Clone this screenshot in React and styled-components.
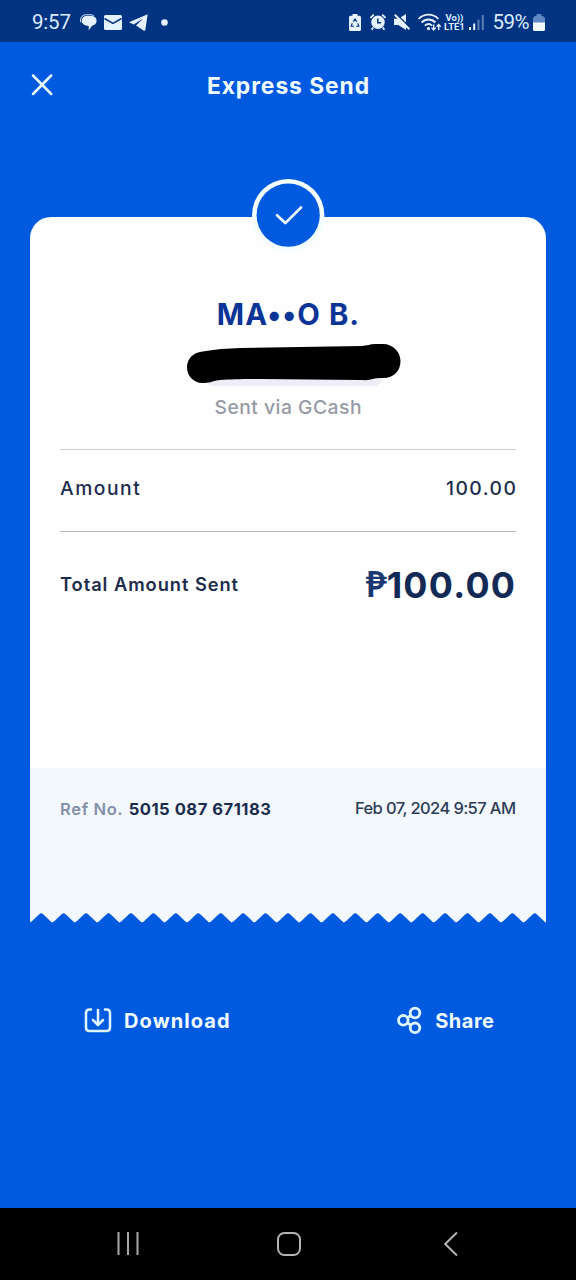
import React from 'react';
import styled, { createGlobalStyle } from 'styled-components';

const GlobalStyle = createGlobalStyle`
  * {
    box-sizing: border-box;
  }

  body {
    margin: 0;
    background: #005ae0;
    font-family: Inter, 'Liberation Sans', sans-serif;
  }
`;

const Screen = styled.div`
  display: flex;
  flex-direction: column;
  width: 576px;
  height: 1280px;
  background: #005ae0;
  overflow: hidden;
`;

const StatusBar = styled.div`
  display: flex;
  justify-content: space-between;
  align-items: center;
  height: 42px;
  padding: 2px 31px 0 32px;
  background: #003381;
  color: #dcecff;
  font-family: Roboto, sans-serif;
`;

const StatusGroup = styled.div`
  display: flex;
  align-items: center;
`;

const StatusText = styled.span`
  margin-left: ${(props) => props.$gap || 0}px;
  font-size: 20.5px;
  line-height: 24px;
  letter-spacing: ${(props) => props.$spacing || 0}px;
`;

const Icon = styled.svg`
  display: block;
  flex: none;
  margin-left: ${(props) => props.$gap || 0}px;
  overflow: visible;
`;

const Network = styled.div`
  display: flex;
  flex-direction: column;
  align-items: center;
  width: 21px;
  margin-left: 3px;
  font-size: 9.5px;
  font-weight: 700;
  line-height: 9px;
`;

const Header = styled.header`
  display: grid;
  grid-template-columns: 24px 1fr 24px;
  align-items: center;
  height: 87px;
  padding: 0 30px;
`;

const CloseButton = styled.button`
  padding: 0 0 2px;
  border: none;
  background: none;
  cursor: pointer;
`;

const Text = styled.span`
  color: ${(props) => props.$color || '#1c2c4c'};
  font-size: ${(props) => props.$size}px;
  font-weight: ${(props) => props.$weight || 500};
  letter-spacing: ${(props) => props.$spacing || 0}px;
  margin-right: ${(props) => -(props.$spacing || 0)}px;
  line-height: 1.2;
  white-space: nowrap;
`;

const Title = styled(Text).attrs({ as: 'h1' })`
  margin-top: 0;
  margin-bottom: 0;
  text-align: center;
`;

const Receipt = styled.main`
  position: relative;
  display: flex;
  flex-direction: column;
  height: 706px;
  margin: 88px 30px 0;
`;

const Badge = styled.div`
  position: absolute;
  top: -38px;
  left: 222px;
`;

const Details = styled.section`
  height: 551px;
  padding: 80px 30px 0;
  border-radius: 21px 21px 0 0;
  background: #fefefe;
`;

const Recipient = styled.div`
  display: flex;
  flex-direction: column;
  align-items: center;
  height: 152px;
`;

const Redaction = styled(Icon)`
  margin: 10px 0 9px 12px;
`;

const Line = styled.div`
  display: flex;
  align-items: center;
  justify-content: space-between;
  height: ${(props) => props.$height}px;
  padding-bottom: ${(props) => props.$lift || 0}px;
  border-top: 1.5px solid ${(props) => props.$border};
`;

const Total = styled.div`
  display: flex;
  align-items: center;
  margin-right: 1px;
`;

const Peso = styled(Text)`
  margin-right: 0;
  padding-bottom: 3px;
  font-family: Lato, sans-serif;
`;

const Footer = styled.section`
  display: flex;
  justify-content: space-between;
  height: 145px;
  padding: 31px 30px 0;
  background: #f3f7fe;
`;

const Reference = styled.div`
  display: flex;
  gap: 6px;
  padding-top: 1px;
`;

const Actions = styled.div`
  display: flex;
  justify-content: space-between;
  margin: 78px 82px 0 84px;
  height: 40px;
`;

const Action = styled.button`
  display: flex;
  align-items: center;
  gap: ${(props) => props.$gap}px;
  padding: 0;
  border: none;
  background: none;
  font-family: inherit;
  cursor: pointer;
`;

const NavBar = styled.nav`
  display: flex;
  justify-content: space-between;
  align-items: center;
  height: 72px;
  margin-top: auto;
  padding: 0 118px 0 116px;
  background: #000;
`;

const TEETH = 23;

const zigzag = () => {
  const step = 516 / TEETH;
  let d = 'M0 0V9.3';
  for (let i = 0; i < TEETH; i++) {
    const x = i * step;
    const mid = x + step / 2;
    d += `L${x + 1.6} 8.6L${mid - 2} 1.3Q${mid} -0.6 ${mid + 2} 1.3L${x + step - 1.6} 8.6Q${x + step} 10 ${x + step} 9.3`;
  }
  return `${d}V0Z`;
};

const App = () => (
  <>
    <GlobalStyle />
    <Screen>
      <StatusBar>
        <StatusGroup>
          <StatusText $spacing={-0.2}>9:57</StatusText>
          {/* chat */}
          <Icon $gap={9} width="17" height="17" viewBox="0 0 17 17" fill="#e6f3ff">
            <path d="M5.500 2H11c3.400 0 5.600 2 5.600 4.700 0 2.900-2.200 4.500-4.200 4.900L8.700 16.200V12C5 12 1.800 10 1.800 6.800c0-2.500 1.700-4.400 3.700-4.800Z" />
            <path d="M1 8.500C-.4 4.500 2 .8 5.500.8h5c1.200 0 2.400.3 3.200.8" fill="none" stroke="#e6f3ff" strokeWidth="1" />
          </Icon>
          {/* mail */}
          <Icon $gap={7.5} width="18" height="15" viewBox="0 0 18 15">
            <rect width="18" height="15" rx="1.500" fill="#e6f3ff" />
            <path d="M.5 3.500 9 8.300l8.500-4.800" fill="none" stroke="#003381" strokeWidth="1.500" />
          </Icon>
          {/* paper plane */}
          <Icon $gap={6.5} width="19" height="17" viewBox="0 0 19 17" fill="#e6f3ff">
            <path d="M18.700.3 0 8.300l4.700 2.100 9.300-6-7 7.200 7.900 5.100c.7.300 1.200 0 1.400-.7Z" />
          </Icon>
          <Icon $gap={13} width="7" height="7" viewBox="0 0 7 7">
            <circle cx="3.500" cy="3.500" r="3.300" fill="#e6f3ff" />
          </Icon>
        </StatusGroup>
        <StatusGroup>
          {/* battery protection */}
          <Icon width="12" height="17" viewBox="0 0 12 17">
            <path d="M3.500 0h5v1.700H10.500a1.500 1.500 0 0 1 1.500 1.500V15.500a1.500 1.500 0 0 1-1.500 1.500h-9A1.500 1.500 0 0 1 0 15.500V3.200a1.500 1.500 0 0 1 1.500-1.500h2Z" fill="#e6f3ff" />
            <path d="M4.200 7.800 6 5.100l1.800 2.700M8.700 9.300l1.100 2.900H7.200M5 12.200H2.200l1.100-2.900" fill="none" stroke="#003381" strokeWidth="1.100" />
          </Icon>
          {/* alarm */}
          <Icon $gap={9} width="16" height="16" viewBox="0 0 16 16">
            <circle cx="8" cy="8.300" r="6.700" fill="#e6f3ff" />
            <path d="M.4 3.800 3.800.6M15.600 3.800 12.200.6M3.200 13.500 1.600 15.700M12.800 13.500l1.600 2.200" stroke="#e6f3ff" strokeWidth="1.800" />
            <path d="M7.800 4.600v4.200h3.400" fill="none" stroke="#003381" strokeWidth="1.500" />
          </Icon>
          {/* muted */}
          <Icon $gap={8} width="16" height="16" viewBox="0 0 16 16">
            <path d="M0 4.800h4.300L12 0v16l-7.700-5H0Z" fill="#e6f3ff" />
            <path d="M2-.2 16.800 14.200" stroke="#003381" strokeWidth="1.600" />
            <path d="M.8 .8 15.400 15.200" stroke="#e6f3ff" strokeWidth="1.900" />
          </Icon>
          {/* wifi */}
          <Icon $gap={8} width="23" height="17" viewBox="0 0 23 17" fill="none" stroke="#e6f3ff" strokeWidth="1.800">
            <path d="M.6 5C6-.8 15-.8 20.400 5M3.600 8.500c4-4 9.800-4 13.800 0M6.800 11.700c2.400-2.200 5-2.200 7.400 0" />
            <circle cx="10.500" cy="14.600" r="1.600" fill="#e6f3ff" stroke="none" />
            <path d="M15.700 10.500v5M13.600 13.600l2.100 2.300 2.100-2.300M20.700 16v-5M18.700 12.700l2-2.200 2 2.200" strokeWidth="1.400" />
          </Icon>
          <Network>
            <span>Vo))</span>
            <span>LTE1</span>
          </Network>
          {/* signal strength */}
          <Icon $gap={4.5} width="15" height="15" viewBox="0 0 15 15" fill="#e6f3ff">
            <path d="M0 12h2v3H0ZM4.200 8.500h2V15h-2Z" />
            <path d="M8.500 4.500h2V15h-2ZM12.800 0h2v15h-2Z" opacity="0.400" />
          </Icon>
          <StatusText $gap={8} $spacing={-0.5}>59%</StatusText>
          <Icon $gap={4} width="12" height="17" viewBox="0 0 12 17">
            <path d="M3.500 0h5v2H10l2 2v5H0V4l2-2h1.500Z" fill="#5f86c4" />
            <path d="M0 8.500h12v7a1.500 1.500 0 0 1-1.500 1.500h-9A1.500 1.500 0 0 1 0 15.500Z" fill="#f0f8ff" />
          </Icon>
        </StatusGroup>
      </StatusBar>

      <Header>
        <CloseButton aria-label="Close">
          <Icon width="24" height="24" viewBox="0 0 24 24" fill="none" stroke="#e8fbff" strokeWidth="2.500" strokeLinecap="round">
            <path d="M3 2.500 21.200 21M21.200 2.500 3 21" />
          </Icon>
        </CloseButton>
        <Title $size={22.8} $weight={700} $spacing={0.95} $color="#f0fcff">Express Send</Title>
      </Header>

      <Receipt>
        <Details>
          <Recipient>
            <Text $size={29.3} $weight={700} $spacing={1.1} $color="#0b3497">MA••O B.</Text>
            <Redaction width="214" height="45" viewBox="187 342 214 45">
              <rect x="205" y="360" width="178" height="26" rx="9" fill="#ededf7" />
              <path d="M202 383c-8 0-15-7-15-15.500 0-9 6-14.500 14-15.800 14-2.500 26-3.200 40-3.700L362 346c5-.2 8-2 13-2h8c10 0 17.500 8 17.500 17 0 10-7 17-17 17-6 0-9 .3-14 1.800-2 .5-5 .4-9 .3l-100-1.100c-18-.1-31 .2-40 1-6 .3-9 3-18.500 3Z" fill="#000" />
            </Redaction>
            <Text $size={19.3} $weight={500} $spacing={0.5} $color="#979aa5">Sent via GCash</Text>
          </Recipient>
          <Line $height={81.5} $lift={4} $border="#cfcfd2">
            <Text $size={19.3} $spacing={1.5}>Amount</Text>
            <Text $size={19.3} $spacing={1.5}>100.00</Text>
          </Line>
          <Line $height={108} $border="#b9babd">
            <Text $size={18.3} $spacing={0.95} $weight={600}>Total Amount Sent</Text>
            <Total>
              <Peso $size={36} $weight={700} $color="#18386f">₱</Peso>
              <Text $size={35.8} $weight={700} $spacing={1.3} $color="#132a56">100.00</Text>
            </Total>
          </Line>
        </Details>
        <Footer>
          <Reference>
            <Text $size={16.6} $weight={600} $spacing={0.6} $color="#8490a7">Ref No.</Text>
            <Text $size={16.6} $weight={700} $spacing={0.5}>5015 087 671183</Text>
          </Reference>
          <Text $size={16.5} $spacing={-0.6} $color="#2c3c55">Feb 07, 2024 9:57 AM</Text>
        </Footer>
        <Icon width="516" height="10" viewBox="0 0 516 10">
          <path d={zigzag()} fill="#f3f7fe" />
        </Icon>
        <Badge>
          <Icon width="73" height="73" viewBox="0 0 73 73">
            <circle cx="36.200" cy="36.200" r="36.200" fill="#f3fdff" />
            <circle cx="36.200" cy="36.200" r="31.600" fill="#005ae0" />
            <path d="m25 36.300 8.300 7.800L49 28.500" fill="none" stroke="#effcff" strokeWidth="2.700" strokeLinecap="round" strokeLinejoin="round" />
          </Icon>
        </Badge>
      </Receipt>

      <Actions>
        <Action $gap={12}>
          <Icon width="28" height="26" viewBox="0 0 28 26" fill="none" stroke="#dff5ff" strokeWidth="2.500" strokeLinecap="round" strokeLinejoin="round">
            <path d="M7 1.500H5.500C3.300 1.500 2 2.800 2 5v14.500C2 21.700 3.300 23 5.500 23h17c2.200 0 3.500-1.300 3.500-3.500V5c0-2.200-1.300-3.500-3.500-3.500H21" />
            <path d="M14 2v14.500M9 12l5 5 5-5" />
          </Icon>
          <Text $size={20} $weight={700} $spacing={1.1} $color="#f0fcff">Download</Text>
        </Action>
        <Action $gap={14}>
          <Icon width="25" height="28" viewBox="-1 0 25 28" fill="none" stroke="#dff5ff" strokeWidth="2.800">
            <circle cx="6.300" cy="13.300" r="4.800" />
            <circle cx="18" cy="6" r="4.800" />
            <circle cx="18" cy="20.800" r="4.800" />
            <path d="m10.300 10.800 3.600-2.300M10.300 15.800l3.600 2.300" />
          </Icon>
          <Text $size={20} $weight={700} $spacing={0.5} $color="#f0fcff">Share</Text>
        </Action>
      </Actions>

      <NavBar>
        <Icon width="24" height="24" viewBox="0 0 24 24" stroke="#a9a9a9" strokeWidth="2">
          <path d="M2.500 0v23M12 0v23M21.500 0v23" />
        </Icon>
        <Icon width="24" height="24" viewBox="0 0 24 24" fill="none" stroke="#b4b4b4" strokeWidth="2">
          <rect x="1" y="1" width="22" height="22" rx="6.500" />
        </Icon>
        <Icon width="20" height="24" viewBox="-6 0 20 24" fill="none" stroke="#b4b4b4" strokeWidth="2">
          <path d="M13 .5 1.200 12 13 23.500" />
        </Icon>
      </NavBar>
    </Screen>
  </>
);

export default App;
